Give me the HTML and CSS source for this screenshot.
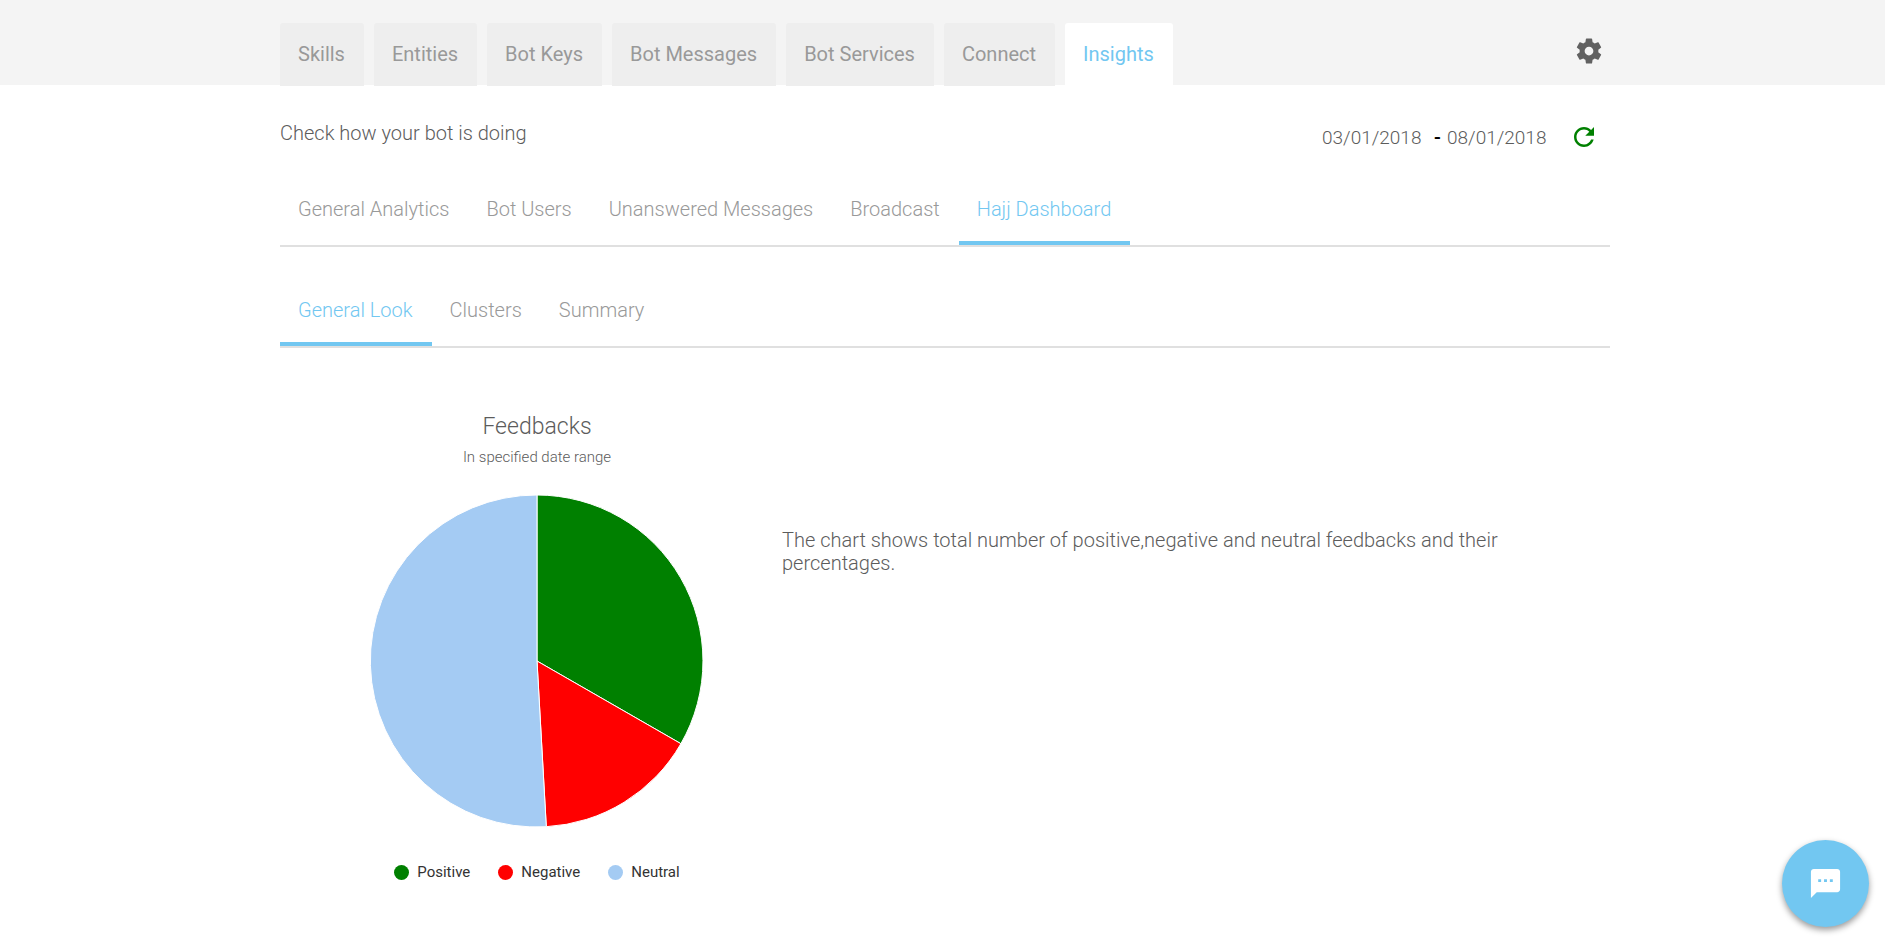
FILE: index.html
```
<!DOCTYPE html>
<html lang="en">
<head>
  <meta charset="UTF-8" />
  <title>Bot Insights</title>
  <meta name="viewport" content="width=device-width, initial-scale=1.0"/>
  <link rel="stylesheet" href="styles.css">
</head>
<body>
  <!-- top bar -->
  <header class="header">
    <div class="wrapper header-row">
      <nav class="main-tabs">
        <a href="#skills">Skills</a>
        <a href="#entities">Entities</a>
        <a href="#keys">Bot Keys</a>
        <a href="#messages">Bot Messages</a>
        <a href="#services">Bot Services</a>
        <a href="#connect">Connect</a>
        <a href="#insights" class="active">Insights</a>
      </nav>
      <button class="icon-button settings" type="button" aria-label="Settings">
        <svg viewBox="0 0 24 24"><path d="M19.43 12.98c.04-.32.07-.64.07-.98s-.03-.66-.07-.98l2.11-1.65c.19-.15.24-.42.12-.64l-2-3.46c-.12-.22-.39-.3-.61-.22l-2.49 1c-.52-.4-1.08-.73-1.69-.98l-.38-2.65C14.46 2.18 14.25 2 14 2h-4c-.25 0-.46.18-.49.42l-.38 2.65c-.61.25-1.17.59-1.69.98l-2.49-1c-.23-.09-.49 0-.61.22l-2 3.46c-.13.22-.07.49.12.64l2.11 1.65c-.04.32-.07.65-.07.98s.03.66.07.98l-2.11 1.65c-.19.15-.24.42-.12.64l2 3.46c.12.22.39.3.61.22l2.49-1c.52.4 1.08.73 1.69.98l.38 2.65c.03.24.24.42.49.42h4c.25 0 .46-.18.49-.42l.38-2.65c.61-.25 1.17-.59 1.69-.98l2.49 1c.23.09.49 0 .61-.22l2-3.46c.12-.22.07-.49-.12-.64l-2.11-1.65zM12 15.5c-1.93 0-3.5-1.57-3.5-3.5s1.57-3.5 3.5-3.5 3.5 1.57 3.5 3.5-1.57 3.5-3.5 3.5z"/></svg>
      </button>
    </div>
  </header>

  <main class="wrapper">
    <div class="toolbar">
      <p class="intro">Check how your bot is doing</p>
      <form class="date-range">
        <input type="text" value="03/01/2018" aria-label="Start date">
        <span class="dash">-</span>
        <input type="text" value="08/01/2018" aria-label="End date">
        <button class="icon-button refresh" type="button" aria-label="Refresh">
          <svg viewBox="0 0 24 24"><path d="M17.65 6.35C16.2 4.9 14.21 4 12 4c-4.42 0-7.99 3.58-7.99 8s3.57 8 7.99 8c3.73 0 6.84-2.55 7.73-6h-2.08c-.82 2.33-3.04 4-5.65 4-3.31 0-6-2.69-6-6s2.69-6 6-6c1.66 0 3.14.69 4.22 1.78L13 11h7V4l-2.35 2.35z"/></svg>
        </button>
      </form>
    </div>

    <nav class="sub-tabs">
      <a href="#general">General Analytics</a>
      <a href="#users">Bot Users</a>
      <a href="#unanswered">Unanswered Messages</a>
      <a href="#broadcast">Broadcast</a>
      <a href="#hajj" class="active">Hajj Dashboard</a>
    </nav>

    <nav class="sub-tabs">
      <a href="#look" class="active">General Look</a>
      <a href="#clusters">Clusters</a>
      <a href="#summary">Summary</a>
    </nav>

    <!-- feedback chart -->
    <section class="report">
      <div class="chart">
        <h2>Feedbacks</h2>
        <p class="chart-note">In specified date range</p>
        <svg class="pie" viewBox="-167 -167 334 334" role="img" aria-label="Feedbacks pie chart">
          <path fill="#008000" d="M0 0V-166A166 166 0 0 1 143.9 82.7Z"/>
          <path fill="#ff0000" d="M0 0L143.9 82.7A166 166 0 0 1 9.3 165.7Z"/>
          <path fill="#a4cbf3" d="M0 0L9.3 165.7A166 166 0 1 1 0 -166Z"/>
        </svg>
        <ul class="legend">
          <li><span class="dot positive"></span>Positive</li>
          <li><span class="dot negative"></span>Negative</li>
          <li><span class="dot neutral"></span>Neutral</li>
        </ul>
      </div>
      <p class="description">The chart shows total number of positive,negative and neutral feedbacks and their percentages.</p>
    </section>
  </main>

  <button class="chat-button" type="button" aria-label="Open chat">
    <svg viewBox="0 0 24 24"><path d="M20 2H4c-1.1 0-1.99.9-1.99 2L2 22l4-4h14c1.1 0 2-.9 2-2V4c0-1.1-.9-2-2-2zM9 11H7V9h2v2zm4 0h-2V9h2v2zm4 0h-2V9h2v2z"/></svg>
  </button>
</body>
</html>
```
FILE: styles.css
```
*{box-sizing:border-box;}
body{margin:0;background:#fff;color:#5c5c5c;font-family:Roboto, "Liberation Sans", sans-serif;
     font-size:20px;font-weight:300;line-height:23px;}
h2,p,ul{margin:0;padding:0;}
a{text-decoration:none;color:#999;}
a.active{color:#72c7f1;}
button{padding:0;border:none;background:none;cursor:pointer;}
svg{display:block;fill:currentColor;}

.wrapper{max-width:1335px;margin:0 auto;padding-left:5px;}

/* ---------- top bar ---------- */
.header{height:85px;padding-top:23px;background:#f4f4f4;}
.header-row{display:flex;justify-content:space-between;align-items:flex-start;}
.main-tabs{display:flex;gap:10px;}
.main-tabs a{height:63px;padding:20px 19px 20px 18px;background:#eee;border-radius:3px 3px 0 0;font-weight:400;}
.main-tabs a.active{background:#fff;}
.icon-button svg{width:30px;height:30px;}
.settings{margin:13px 6px 0 0;color:#616161;}

/* ---------- intro + date range ---------- */
.toolbar{display:flex;justify-content:space-between;height:95px;padding-top:37px;}
.date-range{display:flex;align-items:center;height:30px;}
.date-range input{width:112px;padding:0;border:none;background:none;color:#5c5c5c;font:inherit;font-size:19px;}
.dash{width:13px;color:#000;font-weight:500;}
.refresh{margin:0 11px 0 10px;color:#008000;}

/* ---------- sub tabs ---------- */
.sub-tabs{display:flex;height:67px;margin-bottom:34px;border-bottom:2px solid #e0e0e0;}
.sub-tabs a{padding:18px 19px 0 18px;}
.sub-tabs a.active{border-bottom:4px solid #72c7f1;}

/* ---------- chart ---------- */
.report{display:flex;padding-top:30px;}
.chart{display:flex;flex-direction:column;align-items:center;flex:0 0 502px;padding-left:12px;}
.chart h2{font-size:23px;font-weight:300;line-height:30px;}
.chart-note{margin-top:4px;font-size:15px;}
.pie{width:334px;height:334px;margin-top:25px;stroke:#fff;stroke-width:1;}
.legend{display:flex;gap:28px;margin-top:33px;list-style:none;color:#333;font-size:15px;font-weight:400;}
.legend li{display:flex;align-items:center;}
.dot{width:15px;height:15px;margin-right:8px;border-radius:50%;}
.positive{background:#008000;}
.negative{background:#f00;}
.neutral{background:#a4cbf3;}
.description{flex:1;padding:117px 60px 0 0;}

/* ---------- chat ---------- */
.chat-button{display:flex;align-items:center;justify-content:center;position:fixed;right:16px;bottom:10px;
             width:87px;height:87px;border-radius:50%;background:#72c7f1;color:#fff;
             box-shadow:0 3px 6px rgba(0,0,0,.4);}
.chat-button svg{width:35px;height:35px;}
```
